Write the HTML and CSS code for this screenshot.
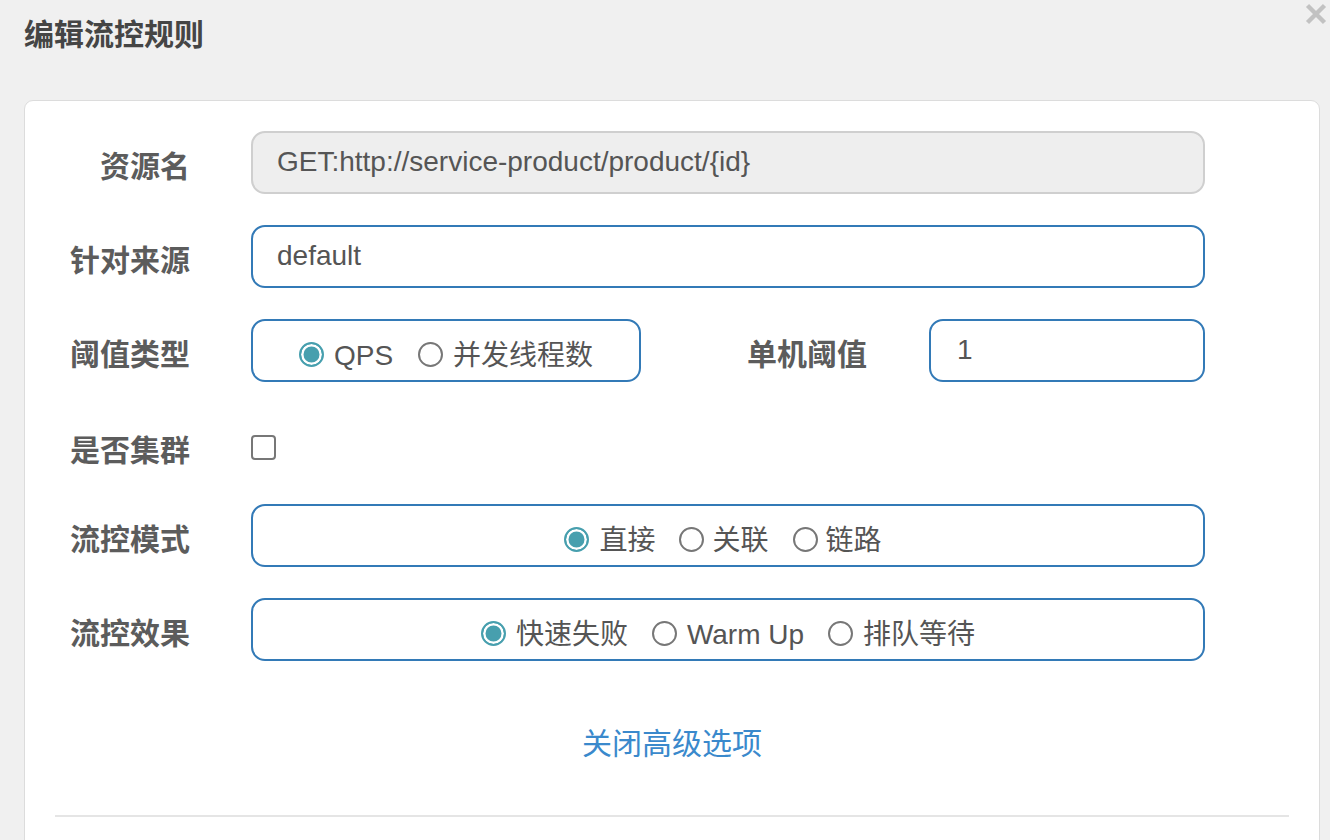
FILE: index.html
```html
<!DOCTYPE html>
<html lang="zh-CN">
<head>
<meta charset="utf-8">
<title>编辑流控规则</title>
<link rel="stylesheet" href="styles.css">
</head>
<body>
<div class="modal">
  <div class="modal-header">
    <h4 class="modal-title">编辑流控规则</h4>
    <button class="close" type="button" aria-label="关闭">
      <svg viewBox="0 0 22 22" width="22" height="22"><path d="M2.5 2.5 L19.5 19.5 M19.5 2.5 L2.5 19.5" stroke="#c2c2c2" stroke-width="4.4" fill="none"/></svg>
    </button>
  </div>
  <div class="card">
    <div class="form">
      <div class="row">
        <label class="label">资源名</label>
        <div class="input disabled">GET:http://service-product/product/{id}</div>
      </div>
      <div class="row">
        <label class="label">针对来源</label>
        <div class="input">default</div>
      </div>
      <div class="row">
        <label class="label">阈值类型</label>
        <div class="radio-group small">
          <span class="radio checked"></span><span class="rtext">QPS</span>
          <span class="radio"></span><span class="rtext">并发线程数</span>
        </div>
        <label class="label label-mid">单机阈值</label>
        <div class="input short">1</div>
      </div>
      <div class="row row-check">
        <label class="label">是否集群</label>
        <span class="checkbox"></span>
      </div>
      <div class="row">
        <label class="label">流控模式</label>
        <div class="radio-group wide mode">
          <span class="radio checked"></span><span class="rtext">直接</span>
          <span class="radio"></span><span class="rtext">关联</span>
          <span class="radio"></span><span class="rtext">链路</span>
        </div>
      </div>
      <div class="row">
        <label class="label">流控效果</label>
        <div class="radio-group wide effect">
          <span class="radio checked"></span><span class="rtext">快速失败</span>
          <span class="radio"></span><span class="rtext">Warm Up</span>
          <span class="radio"></span><span class="rtext">排队等待</span>
        </div>
      </div>
    </div>
    <div class="advanced"><a class="link">关闭高级选项</a></div>
    <div class="divider"></div>
  </div>
</div>
</body>
</html>
```
FILE: styles.css
```css
html, body {
  margin: 0;
  padding: 0;
  background: #f0f0f0;
  height: 100%;
  overflow: hidden;
}
body {
  font-family: "Liberation Sans", "Noto Sans CJK SC", sans-serif;
  color: #555;
}
.modal {
  padding: 0 10px 0 24px;
}
.modal-header {
  position: relative;
  height: 100px;
}
.modal-title {
  margin: 0;
  padding-top: 14px;
  font-size: 30px;
  line-height: 36px;
  font-weight: bold;
  color: #454545;
  font-family: "Noto Sans CJK SC", sans-serif;
}
.close {
  position: absolute;
  right: -7px;
  top: 3px;
  padding: 0;
  border: 0;
  background: none;
  width: 22px;
  height: 22px;
}
.close svg { display: block; }
.card {
  width: 1296px;
  height: 760px;
  background: #fff;
  border: 1px solid #dcdcdc;
  border-radius: 9px;
  box-sizing: border-box;
  padding: 30px 30px 0 30px;
}
.form {
  display: flex;
  flex-direction: column;
  gap: 31px;
}
.row {
  display: flex;
  align-items: center;
  height: 63px;
  margin-left: -30px;
}
.row-check {
  height: 60px;
  padding-top: 8px;
  box-sizing: border-box;
}
.label {
  width: 226px;
  flex: none;
  box-sizing: border-box;
  padding: 2px 61px 0 0;
  text-align: right;
  font-family: "Noto Sans CJK SC", sans-serif;
  font-weight: bold;
  font-size: 30px;
  line-height: 36px;
  color: #5c5c5c;
}
.label-mid {
  width: 288px;
  padding-right: 62px;
}
.input {
  width: 954px;
  height: 63px;
  box-sizing: border-box;
  border: 2px solid #337ab7;
  border-radius: 14px;
  padding: 0 24px;
  font-size: 28px;
  line-height: 57px;
  color: #555;
  white-space: nowrap;
}
.input.disabled {
  background: #eee;
  border-color: #cfcfcf;
}
.input.short {
  width: 276px;
  padding-left: 26px;
}
.radio-group {
  height: 63px;
  box-sizing: border-box;
  border: 2px solid #337ab7;
  border-radius: 14px;
  padding-top: 7px;
  display: flex;
  align-items: center;
  justify-content: center;
  font-size: 28px;
  color: #555;
}
.radio-group.small { width: 390px; }
.radio-group.wide { width: 954px; }
.radio-group.mode { padding-right: 10px; }
.radio {
  width: 25px;
  height: 25px;
  box-sizing: border-box;
  border: 2px solid #777;
  border-radius: 50%;
  margin: 0 10px 0 25px;
  flex: none;
}
.radio:first-child { margin-left: 0; }
.radio.checked {
  border: 2.5px solid #479fae;
  background: #479fae;
  box-shadow: inset 0 0 0 2.5px #fff;
}
.rtext {
  font-family: "Liberation Sans", "Noto Sans CJK SC", sans-serif;
  line-height: 36px;
  padding-top: 4px;
  white-space: nowrap;
}
.mode .radio { margin-left: 24px; margin-right: 8px; }
.mode .radio:first-child { margin-left: 0; margin-right: 10px; }
.effect .radio { margin-left: 24px; }
.effect .radio:first-child { margin-left: 0; }
.checkbox {
  width: 25px;
  height: 25px;
  box-sizing: border-box;
  border: 2px solid #777;
  border-radius: 4px;
  flex: none;
}
.advanced {
  text-align: center;
  padding-top: 62px;
  height: 94px;
  box-sizing: border-box;
}
.link {
  font-family: "Noto Sans CJK SC", sans-serif;
  font-size: 30px;
  line-height: 36px;
  color: #3a89cc;
  cursor: pointer;
}
.divider {
  margin-top: 60px;
  height: 2px;
  background: #e5e5e5;
}
```
